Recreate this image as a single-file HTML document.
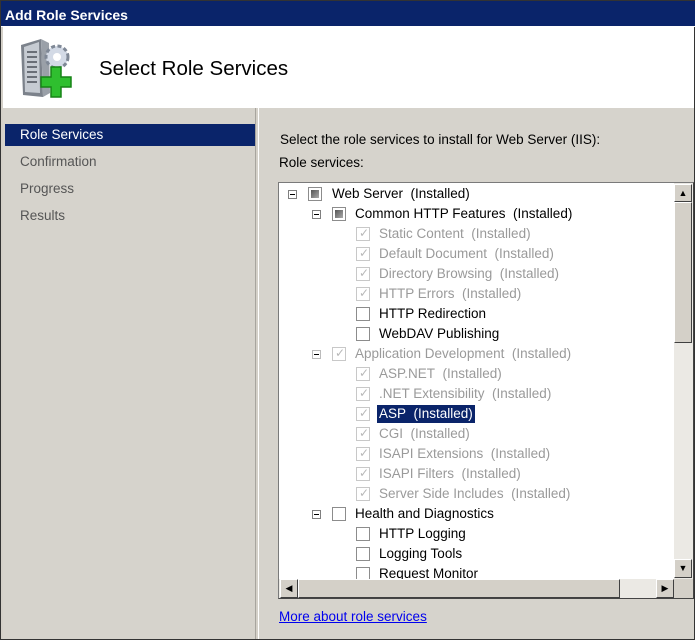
<!DOCTYPE html>
<html><head><style>
*{margin:0;padding:0;box-sizing:border-box}
body{width:695px;height:640px;background:#d4d0c8;font-family:"Liberation Sans",Tahoma,sans-serif;font-size:13px;position:relative;overflow:hidden;border:1px solid #333}
.a{position:absolute}
.title{left:0;top:0;width:695px;height:26px;background:#0a246a;color:#fff;font-weight:bold;font-size:14px;padding:6px 0 0 4px;border-bottom:1px solid #fff}
.hdr{left:2px;top:26px;width:691px;height:81px;background:#fff}
.left{left:2px;top:107px;width:253px;height:531px;background:#d6d3cc;border-right:1px solid #a8a59e}
.right{left:257px;top:107px;width:436px;height:531px;background:#d6d3cc;border-left:1px solid #fff}
.nav{left:4px;width:250px;height:22px;padding:3px 0 0 15px;color:#555;font-size:13.5px}
.tree{left:277px;top:181px;width:416px;height:417px;background:#fff;border:1px solid #7a7a7a;border-right-color:#444;border-bottom-color:#444}
.row{position:absolute;height:20px;white-space:nowrap;font-size:13.5px;color:#000}
.g{color:#9a9a9a}
.ex{position:absolute;width:9px;height:9px;border:1px solid #7f7f7f;background:#fff}
.ex:after{content:"";position:absolute;left:1px;top:3px;width:5px;height:1px;background:#000}
.cb{position:absolute;width:14px;height:14px;border:1px solid #8c8c8c;background:#fff}
.cb.p:after{content:"";position:absolute;left:2px;top:2px;width:8px;height:8px;background:linear-gradient(135deg,#555,#aaa);}
.cb.c{border-color:#c8c8c8}
.cb.c:after{content:"✓";position:absolute;left:2px;top:-2px;font-size:12px;color:#b8b8b8}
.btn{position:absolute;background:#d4d0c8;border:1px solid;border-color:#fff #404040 #404040 #fff}
</style></head><body>
<div class="a title">Add Role Services</div>
<div class="a hdr">
<svg class="a" style="left:14px;top:10px" width="62" height="64" viewBox="0 0 62 64">
<polygon points="4,8 24,2 26,60 6,58" fill="#7c828b"/>
<polygon points="7,10 22,5 23,56 8,55" fill="#c6cbd2"/>
<polygon points="24,2 32,6 33,56 26,60" fill="#9aa0a8"/>
<g fill="#6a6f77"><rect x="10" y="14" width="10" height="2"/><rect x="10" y="19" width="10" height="2"/><rect x="10" y="24" width="10" height="2"/><rect x="10" y="29" width="10" height="2"/><rect x="10" y="34" width="10" height="2"/><rect x="10" y="39" width="10" height="2"/><rect x="10" y="44" width="10" height="2"/></g>
<circle cx="40" cy="20" r="11" fill="#d3dae6" stroke="#7f8896" stroke-width="3" stroke-dasharray="4 2.5"/>
<circle cx="40" cy="20" r="4" fill="#fff"/>
<path d="M34 30h10v10h10v10H44v10H34V50H24V40h10z" fill="#2fbf2f" stroke="#178317" stroke-width="1.5"/>
</svg>
<div class="a" style="left:96px;top:30px;font-size:20.5px;color:#000">Select Role Services</div>
</div>
<div class="a left"></div>
<div class="a right"></div>
<div class="a nav" style="top:123px;background:#0a246a;color:#fff">Role Services</div>
<div class="a nav" style="top:150px">Confirmation</div>
<div class="a nav" style="top:177px">Progress</div>
<div class="a nav" style="top:204px">Results</div>
<div class="a" style="left:279px;top:131px;font-size:13.5px">Select the role services to install for Web Server (IIS):</div>
<div class="a" style="left:278px;top:154px;font-size:13.5px">Role services:</div>
<div class="a tree">
<div class="ex" style="left:9px;top:7px"></div><div class="cb p" style="left:29px;top:4px"></div><div class="row" style="left:53px;top:3px">Web Server&nbsp; (Installed)</div>
<div class="ex" style="left:33px;top:27px"></div><div class="cb p" style="left:53px;top:24px"></div><div class="row" style="left:76px;top:23px">Common HTTP Features&nbsp; (Installed)</div>
<div class="cb c" style="left:77px;top:44px"></div><div class="row g" style="left:100px;top:43px">Static Content&nbsp; (Installed)</div>
<div class="cb c" style="left:77px;top:64px"></div><div class="row g" style="left:100px;top:63px">Default Document&nbsp; (Installed)</div>
<div class="cb c" style="left:77px;top:84px"></div><div class="row g" style="left:100px;top:83px">Directory Browsing&nbsp; (Installed)</div>
<div class="cb c" style="left:77px;top:104px"></div><div class="row g" style="left:100px;top:103px">HTTP Errors&nbsp; (Installed)</div>
<div class="cb" style="left:77px;top:124px"></div><div class="row" style="left:100px;top:123px">HTTP Redirection</div>
<div class="cb" style="left:77px;top:144px"></div><div class="row" style="left:100px;top:143px">WebDAV Publishing</div>
<div class="ex" style="left:33px;top:167px;border-color:#bbb"></div><div class="cb c" style="left:53px;top:164px"></div><div class="row g" style="left:76px;top:163px">Application Development&nbsp; (Installed)</div>
<div class="cb c" style="left:77px;top:184px"></div><div class="row g" style="left:100px;top:183px">ASP.NET&nbsp; (Installed)</div>
<div class="cb c" style="left:77px;top:204px"></div><div class="row g" style="left:100px;top:203px">.NET Extensibility&nbsp; (Installed)</div>
<div class="cb c" style="left:77px;top:224px"></div><div class="row" style="left:98px;top:222px;background:#0a246a;color:#fff;padding:1px 2px;height:18px;outline:1px dotted #fff">ASP&nbsp; (Installed)</div>
<div class="cb c" style="left:77px;top:244px"></div><div class="row g" style="left:100px;top:243px">CGI&nbsp; (Installed)</div>
<div class="cb c" style="left:77px;top:264px"></div><div class="row g" style="left:100px;top:263px">ISAPI Extensions&nbsp; (Installed)</div>
<div class="cb c" style="left:77px;top:284px"></div><div class="row g" style="left:100px;top:283px">ISAPI Filters&nbsp; (Installed)</div>
<div class="cb c" style="left:77px;top:304px"></div><div class="row g" style="left:100px;top:303px">Server Side Includes&nbsp; (Installed)</div>
<div class="ex" style="left:33px;top:327px"></div><div class="cb" style="left:53px;top:324px"></div><div class="row" style="left:76px;top:323px">Health and Diagnostics</div>
<div class="cb" style="left:77px;top:344px"></div><div class="row" style="left:100px;top:343px">HTTP Logging</div>
<div class="cb" style="left:77px;top:364px"></div><div class="row" style="left:100px;top:363px">Logging Tools</div>
<div class="cb" style="left:77px;top:384px"></div><div class="row" style="left:100px;top:383px">Request Monitor</div>
<div class="a" style="left:395px;top:0;width:19px;height:396px;background:#ebe9e4"></div>
<div class="btn" style="left:395px;top:1px;width:18px;height:18px;font-size:9px;text-align:center;line-height:16px">▲</div>
<div class="btn" style="left:395px;top:19px;width:18px;height:141px"></div>
<div class="btn" style="left:395px;top:376px;width:18px;height:19px;font-size:9px;text-align:center;line-height:17px">▼</div>
<div class="a" style="left:0;top:396px;width:414px;height:19px;background:#ebe9e4"></div>
<div class="btn" style="left:1px;top:396px;width:18px;height:19px;font-size:9px;text-align:center;line-height:17px">◀</div>
<div class="btn" style="left:19px;top:396px;width:322px;height:19px"></div>
<div class="btn" style="left:377px;top:396px;width:18px;height:19px;font-size:9px;text-align:center;line-height:17px">▶</div>
<div class="a" style="left:395px;top:396px;width:19px;height:19px;background:#d4d0c8"></div>
</div>
<div class="a" style="left:278px;top:608px;font-size:13.5px;color:#0000ee;text-decoration:underline">More about role services</div>
</body></html>
